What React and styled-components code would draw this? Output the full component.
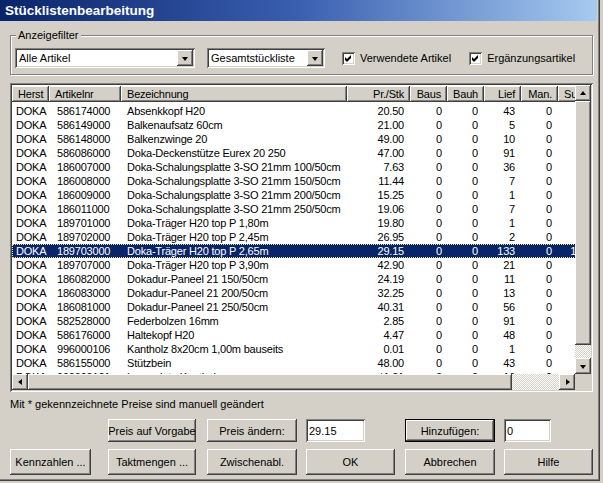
import React from 'react';
import styled, { createGlobalStyle, css } from 'styled-components';

const FACE = '#d4d0c8';
const SHADOW = '#808080';
const DARK = '#404040';
const HILITE = '#ffffff';
const NAVY = '#0a246a';

const GlobalStyle = createGlobalStyle`
  html, body {
    margin: 0;
    padding: 0;
    background: ${FACE};
  }
  body {
    font-family: "Liberation Sans", Arial, sans-serif;
    font-size: 11px;
    color: #000;
  }
  * {
    box-sizing: border-box;
  }
`;

const raised = css`
  box-shadow: inset -1px -1px ${DARK}, inset 1px 1px ${HILITE},
    inset -2px -2px ${SHADOW}, inset 2px 2px ${FACE};
`;

const sunken = css`
  box-shadow: inset 1px 1px ${SHADOW}, inset -1px -1px ${HILITE},
    inset 2px 2px ${DARK}, inset -2px -2px ${FACE};
`;

const checker = css`
  background: repeating-conic-gradient(${FACE} 0 25%, #fff 0 50%) 0 0 / 2px 2px;
`;

// column layout of the list: width, alignment and padding
const COLUMNS = [
  { key: 'herst', title: 'Herst', width: 37, align: 'left', pad: 4 },
  { key: 'nr', title: 'Artikelnr', width: 72, align: 'left', pad: 8 },
  { key: 'bez', title: 'Bezeichnung', width: 226, align: 'left', pad: 6 },
  { key: 'preis', title: 'Pr./Stk', width: 63, align: 'right', pad: 6 },
  { key: 'baus', title: 'Baus', width: 37, align: 'right', pad: 5 },
  { key: 'bauh', title: 'Bauh', width: 37, align: 'right', pad: 6 },
  { key: 'lief', title: 'Lief', width: 37, align: 'right', pad: 6 },
  { key: 'man', title: 'Man.', width: 37, align: 'right', pad: 6 },
  { key: 'su', title: 'Su', width: 36, align: 'right', pad: 6 },
];

const GRID = COLUMNS.map(c => `${c.width}px`).join(' ');

const ROWS = [
  ['586174000', 'Absenkkopf H20', '20.50', 43],
  ['586149000', 'Balkenaufsatz 60cm', '21.00', 5],
  ['586148000', 'Balkenzwinge 20', '49.00', 10],
  ['586086000', 'Doka-Deckenstütze Eurex 20 250', '47.00', 91],
  ['186007000', 'Doka-Schalungsplatte 3-SO 21mm 100/50cm', '7.63', 36],
  ['186008000', 'Doka-Schalungsplatte 3-SO 21mm 150/50cm', '11.44', 7],
  ['186009000', 'Doka-Schalungsplatte 3-SO 21mm 200/50cm', '15.25', 1],
  ['186011000', 'Doka-Schalungsplatte 3-SO 21mm 250/50cm', '19.06', 7],
  ['189701000', 'Doka-Träger H20 top P 1,80m', '19.80', 1],
  ['189702000', 'Doka-Träger H20 top P 2,45m', '26.95', 2],
  ['189703000', 'Doka-Träger H20 top P 2,65m', '29.15', 133],
  ['189707000', 'Doka-Träger H20 top P 3,90m', '42.90', 21],
  ['186082000', 'Dokadur-Paneel 21 150/50cm', '24.19', 11],
  ['186083000', 'Dokadur-Paneel 21 200/50cm', '32.25', 13],
  ['186081000', 'Dokadur-Paneel 21 250/50cm', '40.31', 56],
  ['582528000', 'Federbolzen 16mm', '2.85', 91],
  ['586176000', 'Haltekopf H20', '4.47', 48],
  ['996000106', 'Kantholz 8x20cm 1,00m bauseits', '0.01', 1],
  ['586155000', 'Stützbein', '48.00', 43],
  ['999999101', 'Lagerplatz-Kantholz', '*1.21', 16],
];

const SELECTED = 10;

const Window = styled.div`
  width: 600px;
  height: 481px;
  padding: 0 3px 3px 0;
  background: ${FACE};
  box-shadow: inset -1px -1px ${DARK}, inset -2px -2px ${SHADOW};
  display: flex;
  flex-direction: column;
`;

const TitleBar = styled.div`
  height: 21px;
  padding: 0 5px;
  display: flex;
  align-items: center;
  background: linear-gradient(90deg, ${NAVY} 0%, #3a5fb0 50%, #a6caf0 100%);
  color: #fff;
  font-weight: bold;
  font-size: 13.5px;
`;

const Body = styled.div`
  padding: 0 4px 0 10px;
  display: flex;
  flex-direction: column;
`;

const Group = styled.fieldset`
  margin: 8px 0 0;
  padding: 6px 3px 6px 4px;
  min-width: 0;
  border: 1px solid ${SHADOW};
  box-shadow: inset 1px 1px ${HILITE}, 1px 1px ${HILITE};
  display: flex;
  align-items: center;
`;

const Legend = styled.legend`
  padding: 0 2px;
  margin-left: 1px;
  line-height: 13px;
  background: ${FACE};
  position: relative;
`;

const Combo = styled.div`
  width: ${p => p.$w}px;
  height: 20px;
  margin-right: ${p => p.$gap || 0}px;
  padding: 2px;
  background: #fff;
  ${sunken};
  display: flex;
  align-items: center;
`;

const ComboText = styled.span`
  flex: 1;
  padding-left: 2px;
  white-space: nowrap;
  overflow: hidden;
`;

const ArrowButton = styled.span`
  width: 16px;
  height: 16px;
  flex: 0 0 auto;
  background: ${FACE};
  ${raised};
  display: flex;
  align-items: center;
  justify-content: center;
`;

const Arrow = styled.span`
  width: 0;
  height: 0;
  border-style: solid;
  ${p =>
    p.$dir === 'down' &&
    css`
      border-width: 4px 3.5px 0 3.5px;
      border-color: #000 transparent transparent transparent;
      margin-top: 1px;
    `}
  ${p =>
    p.$dir === 'up' &&
    css`
      border-width: 0 3.5px 4px 3.5px;
      border-color: transparent transparent #000 transparent;
      margin-top: -1px;
    `}
  ${p =>
    p.$dir === 'left' &&
    css`
      border-width: 3.5px 4px 3.5px 0;
      border-color: transparent #000 transparent transparent;
      margin-left: -1px;
    `}
  ${p =>
    p.$dir === 'right' &&
    css`
      border-width: 3.5px 0 3.5px 4px;
      border-color: transparent transparent transparent #000;
      margin-left: 1px;
    `}
`;

const CheckLabel = styled.label`
  display: flex;
  align-items: center;
  gap: 5px;
  margin-left: ${p => p.$ml}px;
  white-space: nowrap;
`;

const CheckBox = styled.span`
  width: 13px;
  height: 13px;
  background: #fff;
  ${sunken};
  display: inline-flex;
`;

const ListFrame = styled.div`
  margin-top: 8px;
  height: 309px;
  padding: 2px;
  ${sunken};
  display: grid;
  grid-template-columns: 1fr 16px;
  grid-template-rows: 1fr 16px;
  background: #fff;
`;

const Viewport = styled.div`
  overflow: hidden;
  background: #fff;
  letter-spacing: -0.2px;
`;

const HeaderRow = styled.div`
  display: grid;
  grid-template-columns: ${GRID};
  height: 16px;
  margin: 1px 0 2px;
  background: ${FACE};
  width: max-content;
`;

const HeaderCell = styled.div`
  box-shadow: inset -1px -1px ${DARK}, inset 1px 1px ${HILITE},
    inset -2px -2px ${SHADOW};
  padding: 0 ${p => p.$pad}px 0 6px;
  line-height: 16px;
  text-align: ${p => p.$align};
  white-space: nowrap;
  overflow: hidden;
`;

const Row = styled.div`
  display: grid;
  grid-template-columns: ${GRID};
  height: 14px;
  line-height: 14px;
  width: max-content;
  ${p =>
    p.$selected &&
    css`
      background: ${NAVY};
      color: #fff;
      outline: 1px dotted #f0e68c;
      outline-offset: -1px;
    `}
`;

const Cell = styled.div`
  padding: ${p => (p.$align === 'right' ? `0 ${p.$pad}px 0 0` : `0 0 0 ${p.$pad}px`)};
  text-align: ${p => p.$align};
  white-space: nowrap;
  overflow: hidden;
`;

const VScroll = styled.div`
  display: flex;
  flex-direction: column;
  ${checker};
`;

const HScroll = styled.div`
  display: flex;
  ${checker};
`;

const ScrollButton = styled.div`
  width: 16px;
  height: 16px;
  flex: 0 0 auto;
  background: ${FACE};
  ${raised};
  display: flex;
  align-items: center;
  justify-content: center;
`;

const Thumb = styled.div`
  flex: 0 0 ${p => p.$size}px;
  background: ${FACE};
  ${raised};
`;

const Track = styled.div`
  flex: 1;
`;

const Corner = styled.div`
  background: ${FACE};
`;

const Note = styled.div`
  margin-top: 6px;
  line-height: 13px;
`;

const Actions = styled.div`
  margin-top: 8px;
  display: grid;
  grid-template-columns: 98px 99px 99px 99px 99px 90px;
  grid-template-rows: 23px 26px;
  row-gap: 7px;
`;

const Button = styled.button`
  width: ${p => p.$w || 90}px;
  height: 100%;
  padding: 0;
  border: none;
  font: inherit;
  color: #000;
  background: ${FACE};
  white-space: nowrap;
  ${p =>
    p.$default
      ? css`
          box-shadow: inset 0 0 0 1px #000, inset -2px -2px ${DARK},
            inset 2px 2px ${HILITE}, inset -3px -3px ${SHADOW};
        `
      : raised};
`;

const Field = styled.div`
  width: ${p => p.$w}px;
  height: 100%;
  padding: 0 3px;
  background: #fff;
  ${sunken};
  display: flex;
  align-items: center;
`;

function Check({ label, ml }) {
  return (
    <CheckLabel $ml={ml}>
      <CheckBox>
        <svg width="13" height="13" viewBox="0 0 13 13">
          <polygon points="3,5 5,7 9,3 9,6 5,10 3,8" fill="#000" />
        </svg>
      </CheckBox>
      {label}
    </CheckLabel>
  );
}

function ListView() {
  return (
    <ListFrame>
      <Viewport>
        <HeaderRow>
          {COLUMNS.map(c => (
            <HeaderCell key={c.key} $align={c.key === 'su' ? 'left' : c.align} $pad={c.align === 'right' ? 6 : 0}>
              {c.title}
            </HeaderCell>
          ))}
        </HeaderRow>
        {ROWS.map(([nr, bez, preis, lief], i) => {
          // the sum column lies mostly under the scrollbar; only a long value shows
          const values = {
            herst: 'DOKA',
            nr,
            bez,
            preis,
            baus: 0,
            bauh: 0,
            lief,
            man: 0,
            su: lief > 99 ? lief : '',
          };
          return (
            <Row key={nr} $selected={i === SELECTED}>
              {COLUMNS.map(c => (
                <Cell key={c.key} $align={c.align} $pad={c.pad}>
                  {values[c.key]}
                </Cell>
              ))}
            </Row>
          );
        })}
      </Viewport>
      <VScroll>
        <ScrollButton>
          <Arrow $dir="up" />
        </ScrollButton>
        <Thumb $size={244} />
        <Track />
        <ScrollButton>
          <Arrow $dir="down" />
        </ScrollButton>
      </VScroll>
      <HScroll>
        <ScrollButton>
          <Arrow $dir="left" />
        </ScrollButton>
        <Thumb $size={484} />
        <Track />
        <ScrollButton>
          <Arrow $dir="right" />
        </ScrollButton>
      </HScroll>
      <Corner />
    </ListFrame>
  );
}

export default function App() {
  return (
    <Window>
      <GlobalStyle />
      <TitleBar>Stücklistenbearbeitung</TitleBar>
      <Body>
        <Group>
          <Legend>Anzeigefilter</Legend>
          <Combo $w={180} $gap={12}>
            <ComboText>Alle Artikel</ComboText>
            <ArrowButton>
              <Arrow $dir="down" />
            </ArrowButton>
          </Combo>
          <Combo $w={118}>
            <ComboText>Gesamtstückliste</ComboText>
            <ArrowButton>
              <Arrow $dir="down" />
            </ArrowButton>
          </Combo>
          <Check label="Verwendete Artikel" ml={17} />
          <Check label="Ergänzungsartikel" ml={18} />
        </Group>
        <ListView />
        <Note>Mit * gekennzeichnete Preise sind manuell geändert</Note>
        <Actions>
          <span />
          <Button $w={88}>Preis auf Vorgabe</Button>
          <Button>Preis ändern:</Button>
          <Field $w={59}>29.15</Field>
          <Button $default>Hinzufügen:</Button>
          <Field $w={47}>0</Field>
          <Button $w={81}>Kennzahlen ...</Button>
          <Button $w={88}>Taktmengen ...</Button>
          <Button>Zwischenabl.</Button>
          <Button $w={89}>OK</Button>
          <Button>Abbrechen</Button>
          <Button $w={89}>Hilfe</Button>
        </Actions>
      </Body>
    </Window>
  );
}
